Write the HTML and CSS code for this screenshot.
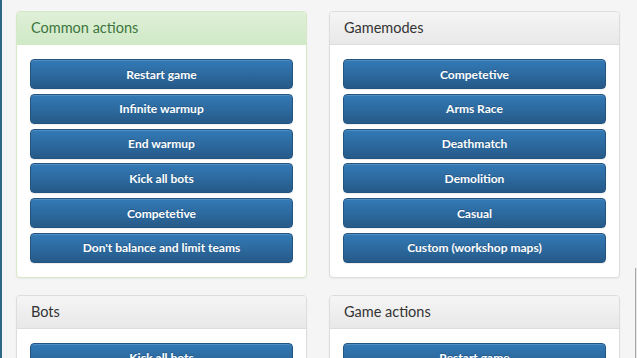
FILE: index.html
```html
<!DOCTYPE html>
<html>
<head>
    <link rel="stylesheet" href="styles.css">
</head>
<body>
    <div class="grid">
        <div class="panel panel-success">
            <div class="panel-heading">Common actions</div>
            <div class="panel-body">
                <button class="btn">Restart game</button>
                <button class="btn">Infinite warmup</button>
                <button class="btn">End warmup</button>
                <button class="btn">Kick all bots</button>
                <button class="btn">Competetive</button>
                <button class="btn">Don't balance and limit teams</button>
            </div>
        </div>

        <div class="panel">
            <div class="panel-heading">Gamemodes</div>
            <div class="panel-body">
                <button class="btn">Competetive</button>
                <button class="btn">Arms Race</button>
                <button class="btn">Deathmatch</button>
                <button class="btn">Demolition</button>
                <button class="btn">Casual</button>
                <button class="btn">Custom (workshop maps)</button>
            </div>
        </div>

        <div class="panel">
            <div class="panel-heading">Bots</div>
            <div class="panel-body">
                <button class="btn">Kick all bots</button>
                <button class="btn">Add bot</button>
            </div>
        </div>

        <div class="panel">
            <div class="panel-heading">Game actions</div>
            <div class="panel-body">
                <button class="btn">Restart game</button>
                <button class="btn">End warmup</button>
            </div>
        </div>
    </div>

    <div class="scroll-track"></div>
</body>
</html>
```

FILE: styles.css
```css
body {
    margin: 0;
    padding: 11px 0 0 16px;
    font-family: Lato, 'Open Sans', sans-serif;
    background: #f5f5f5;
    border-left: 2px solid #2f6784;
    height: 358px;
    overflow: hidden;
    box-sizing: border-box;
}

.grid {
    display: grid;
    grid-template-columns: 291px 291px;
    column-gap: 22px;
    row-gap: 17px;
    margin-left: -2px;
}

.panel {
    background: #fff;
    border: 1px solid #ddd;
    border-radius: 4px;
    box-shadow: 0 1px 2px rgba(0, 0, 0, 0.05);
    overflow: hidden;
}

.panel-heading {
    height: 32px;
    line-height: 32px;
    padding: 0 14px;
    font-size: 14.5px;
    color: #333;
    background: linear-gradient(to bottom, #f5f5f5 0, #e8e8e8 100%);
    border-bottom: 1px solid #ddd;
}

.panel-success {
    border-color: #d6e9c6;
}

.panel-success .panel-heading {
    color: #3c763d;
    background: linear-gradient(to bottom, #dff0d8 0, #d0e9c6 100%);
    border-bottom-color: #d6e9c6;
}

.panel-body {
    display: flex;
    flex-direction: column;
    gap: 4.8px;
    padding: 14px 13px;
}

.btn {
    display: block;
    width: 100%;
    height: 30px;
    padding: 0 10px;
    border: 1px solid #245580;
    border-radius: 4px;
    background: linear-gradient(to bottom, #337ab7 0, #265a88 100%);
    color: #fff;
    font-family: Lato, 'Open Sans', sans-serif;
    font-size: 12px;
    font-weight: 700;
    text-shadow: 0 -1px 0 rgba(0, 0, 0, 0.2);
    box-shadow: inset 0 1px 0 rgba(255, 255, 255, 0.15), 0 1px 1px rgba(0, 0, 0, 0.075);
    cursor: pointer;
}

.scroll-track {
    position: fixed;
    top: 268px;
    right: 0;
    bottom: 0;
    width: 1px;
    border-left: 1px solid #a8a8a8;
    background: #e6e6e6;
}
```
